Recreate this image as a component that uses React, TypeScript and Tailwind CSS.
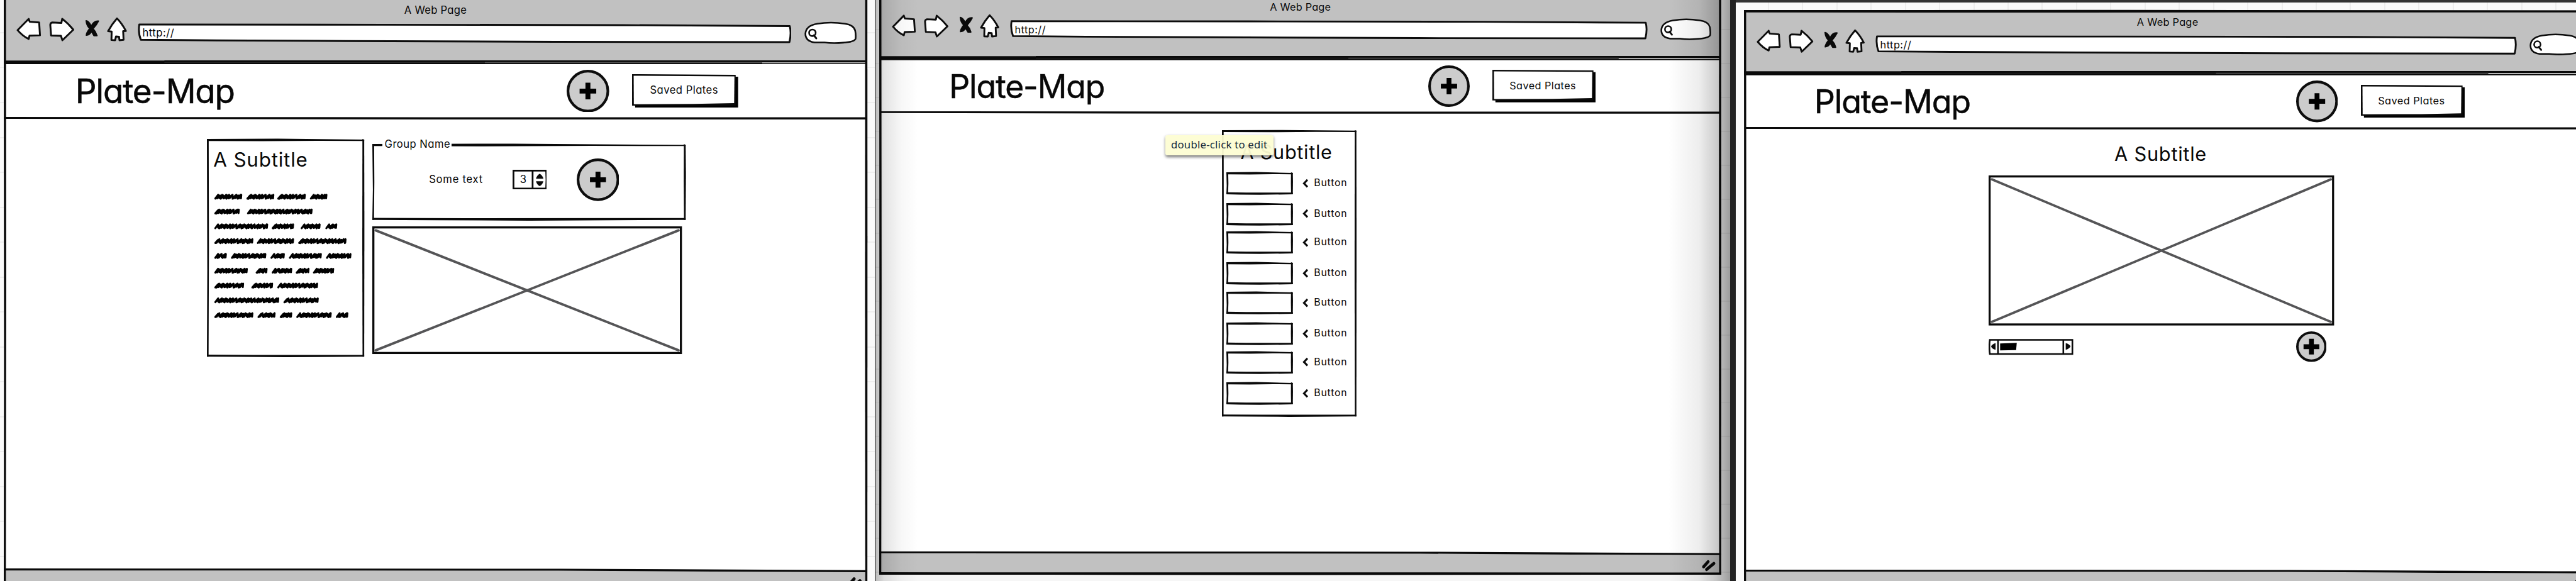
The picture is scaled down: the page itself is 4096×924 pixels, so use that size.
import type { ReactNode } from "react";

/* Hand-drawn rectangle outline, ink thickness varies along each edge. */
function Ink({ w, h, t = 3.6, skew = 1 }: { w: number; h: number; t?: number; skew?: number }) {
  const s = skew;
  return (
    <svg
      className="pointer-events-none absolute left-0 top-0 overflow-visible"
      width={w}
      height={h}
      viewBox={`0 0 ${w} ${h}`}
      fill="#0a0a0a"
    >
      <path d={`M0 0 L${w * 0.45} -${0.4 * s} L${w} ${s} L${w} ${t} L${w * 0.7} ${t - 0.2} L${w * 0.35} ${t + 0.3 * s} L0 ${t}Z`} />
      <path d={`M0 ${h - t} L${w * 0.3} ${h - t + 0.4 * s} L${w} ${h - t + 0.4} L${w} ${h} L${w * 0.5} ${h + 0.9 * s} L${w * 0.2} ${h + 0.4 * s} L0 ${h}Z`} />
      <path d={`M0 0 L${t - 0.4} 0 L${t} ${h * 0.5} L${t - 0.6} ${h} L0 ${h} L${0.6 * s} ${h * 0.6}Z`} />
      <path d={`M${w - t + 0.4} 0 L${w} ${s} L${w + 0.3 * s} ${h * 0.4} L${w} ${h} L${w - t + 0.6} ${h} L${w - t + 0.2} ${h * 0.5}Z`} />
    </svg>
  );
}

function PlusIcon({ size, bar, thick, ring = 4.3 }: { size: number; bar: number; thick: number; ring?: number }) {
  const c = size / 2;
  return (
    <svg className="block shrink-0" width={size} height={size} viewBox={`0 0 ${size} ${size}`}>
      <circle cx={c} cy={c} r={c - ring / 2} fill="#cccccc" stroke="#0d0d0d" strokeWidth={ring} />
      <path
        d={`M${c - bar / 2} ${c}H${c + bar / 2}M${c} ${c - bar / 2}V${c + bar / 2}`}
        stroke="#000"
        strokeWidth={thick}
      />
    </svg>
  );
}

function NavIcons() {
  const ink = { fill: "#fff", stroke: "#0d0d0d", strokeWidth: 9, strokeLinejoin: "round" as const };
  return (
    <>
      <svg className="block shrink-0" width="40" height="44" viewBox="81 84 120 132">
        <path d="M87 148 L141 93 L146 107 L192 111 L196 173 L145 175 L141 191 Q112 178 87 148Z" {...ink} />
      </svg>
      <svg className="ml-3 block shrink-0" width="42" height="44" viewBox="237 84 126 132">
        <path d="M246 122 Q247 112 256 111 L300 113 L304 93 Q336 118 358 146 L305 197 L298 176 L250 174Z" {...ink} />
      </svg>
      <svg className="ml-[17px] block shrink-0" width="24" height="44" viewBox="414 84 72 132">
        <g fill="#0a0a0a" stroke="#0a0a0a" strokeWidth="6" strokeLinejoin="round">
          <path d="M420 102 Q433 104 445 128 Q458 101 480 104 Q470 124 454 141 Q468 156 473 175 L458 175 Q452 165 446 154 Q438 172 421 173 Q420 163 437 140 Q422 126 420 102Z" />
        </g>
      </svg>
      <svg className="ml-[11px] block shrink-0" width="33" height="44" viewBox="519 84 99 132">
        <path d="M568 91 Q594 118 611 152 L598 153 L600 195 L580 197 L578 180 L563 179 L559 197 L541 196 L542 155 L525 153 Q544 118 568 91Z" {...ink} />
      </svg>
    </>
  );
}

function UrlBar() {
  return (
    <div className="relative ml-[17px] h-11 w-[1060px] shrink-0">
      <svg className="absolute left-0 top-0 block" width="1060" height="44" viewBox="223 28 1060 44">
        <path
          d="M225.5 40.3 L620 40.6 L1010 41.2 L1280 42.8 Q1283 54 1279.5 68.8 L900 68.3 L560 67 L350 66 L228 65 Q223.500 54 225.5 40.3Z"
          fill="#fff"
          stroke="#0d0d0d"
          strokeWidth="3"
          strokeLinejoin="round"
        />
      </svg>
      <div className="relative pl-[8px] pt-[14px] text-[17px] leading-6 tracking-[0.5px]">http://</div>
    </div>
  );
}

function SearchPill() {
  return (
    <svg className="ml-[21px] block shrink-0" width="85" height="44" viewBox="1212 84 255 132">
      <path
        d="M1217 165 Q1220 126 1275 117 Q1340 106 1410 117 Q1452 123 1459 150 Q1463 170 1461 190 Q1455 205 1400 209 Q1350 213 1310 208 L1262 208 Q1217 202 1217 165Z"
        fill="#fff"
        stroke="#0d0d0d"
        strokeWidth="8"
      />
      <circle cx="1251" cy="161" r="16" fill="none" stroke="#0d0d0d" strokeWidth="8" />
      <path d="M1258 173 L1270 188" stroke="#0d0d0d" strokeWidth="9" strokeLinecap="round" />
    </svg>
  );
}

function SavedPlates() {
  return (
    <div className="relative ml-[37.500px] mt-[1px] h-[54px] w-[172px] shrink-0">
      <svg className="absolute left-0 top-0 block" width="172" height="54" viewBox="0 0 172 54">
        <path d="M5 4 H172 V54 H5Z" fill="#000" />
        <path d="M0 0 L168 1 V51 H0Z" fill="#0a0a0a" />
        <path d="M2.600 2.500 L166 3.500 L165.500 47 L100 48.300 L2.900 48.600Z" fill="#fff" />
      </svg>
      <div className="relative w-[168px] pt-[14.500px] text-center text-[17px] leading-6 tracking-[0.45px]">Saved Plates</div>
    </div>
  );
}

function BrowserWindow({ children }: { children: ReactNode }) {
  return (
    <div className="relative flex h-[964px] w-[1400px] shrink-0 flex-col bg-white">
      <div className="flex h-[101px] shrink-0 flex-col bg-[#c1c1c1] pt-[10.500px]">
        <div className="text-center text-[17px] leading-5 tracking-[0.25px]">A Web Page</div>
        <div className="flex items-start pl-[21px] pt-[1px]">
          <NavIcons />
          <UrlBar />
          <SearchPill />
        </div>
      </div>
      <svg className="block shrink-0" width="1400" height="7" viewBox="0 0 1400 7">
        <rect width="1400" height="7" fill="#0a0a0a" />
        <path d="M260 3.200 L780 2.800 L780 4 L260 4Z" fill="#2a2a2a" />
        <path d="M780 2.900 H1230 V4.400 H780Z" fill="#555" />
        <path d="M1230 3.200 H1400 V4.700 H1230Z" fill="#e4e4e4" />
        <path d="M0 0 H260 V0.500 H0Z" fill="#777" />
      </svg>
      <div className="flex h-[85px] shrink-0 items-center pl-[116px]">
        <div className="w-[796.500px] shrink-0 pt-[2px] text-[54px] leading-[60px] tracking-[-1.200px] [-webkit-text-stroke:0.5px_#080808]">
          Plate-Map
        </div>
        <div className="pt-px">
          <PlusIcon size={69} bar={27} thick={8} />
        </div>
        <SavedPlates />
      </div>
      <svg className="block shrink-0" width="1400" height="4" viewBox="0 0 1400 4">
        <path d="M0 0 L700 0.500 L1400 0.500 V4 L700 4 L0 3Z" fill="#0a0a0a" />
      </svg>
      <div className="flex min-h-0 flex-1 flex-col">{children}</div>
      <div className="relative h-[39px] shrink-0">
        <svg className="block" width="1400" height="39" viewBox="0 0 1400 39">
          <path d="M0 0 L900 1 L1400 3.500 V39 H0Z" fill="#c1c1c1" />
          <path d="M0 0 L900 0.500 L1400 2.800 V6 L1150 5.200 L900 3.600 L0 3.200Z" fill="#0a0a0a" />
          <path d="M1371 25.500 L1378.500 17" stroke="#0a0a0a" strokeWidth="5" strokeLinecap="round" />
          <path d="M1376 30 L1388 20" stroke="#0a0a0a" strokeWidth="5" strokeLinecap="round" />
        </svg>
      </div>
      <Ink w={1400} h={964} t={4} skew={0.6} />
    </div>
  );
}

function ImagePlaceholder({ w, h }: { w: number; h: number }) {
  return (
    <svg className="block overflow-visible" width={w} height={h} viewBox={`0 0 ${w} ${h}`}>
      <path
        d={`M5.5 6.500 L${w - 5.5} ${h - 6}M${w - 5.5} 6.500 L5.5 ${h - 6}`}
        stroke="#555557"
        strokeWidth="3.900"
        strokeLinecap="round"
      />
      <rect x="1.700" y="1.700" width={w - 3.4} height={h - 3.4} fill="none" stroke="#0a0a0a" strokeWidth="3.400" />
    </svg>
  );
}

/* Word extents of the scribbled paragraph, per line. */
const scribbleLines: [number, number][][] = [
  [[0, 45], [52, 97], [102, 148], [155, 183]],
  [[0, 41], [53, 159]],
  [[0, 87], [93, 129], [140, 172], [180, 199]],
  [[0, 63], [69, 129], [136, 214]],
  [[0, 20], [27, 84], [91, 114], [121, 174], [181, 222]],
  [[0, 54], [67, 86], [93, 126], [132, 154], [160, 194]],
  [[0, 48], [60, 95], [102, 168]],
  [[0, 105], [112, 169]],
  [[0, 63], [70, 99], [106, 126], [133, 190], [197, 217]],
];

function scribble(x0: number, x1: number, y: number) {
  let x = x0 + 1.5;
  let d = `M${x} ${y + 3}`;
  let i = Math.round(x0 * 7 + y) % 5;
  while (x < x1 - 6) {
    const step = [3.6, 2, 4.6, 1.6, 3][i % 5];
    d += ` L${x + 4.5} ${y - 3 + (i % 2)} L${x + step} ${y + 3.2 - (i % 3) * 0.6}`;
    x += step;
    i += 1;
  }
  return d + ` L${x1 - 1.5} ${y - 3} L${x1 - 2} ${y + 2.5}`;
}

function ScribbleText() {
  return (
    <svg className="block" width="230" height="212" viewBox="-3 0 230 212">
      {scribbleLines.map((words, row) =>
        words.map(([a, b]) => (
          <path
            key={`${row}-${a}`}
            d={scribble(a, b, 9 + row * 24)}
            fill="none"
            stroke="#000"
            strokeWidth="3.300"
            strokeLinejoin="round"
            strokeLinecap="round"
          />
        )),
      )}
    </svg>
  );
}

function Stepper() {
  return (
    <div className="relative flex h-8 w-[56px] shrink-0 items-center bg-white">
      <div className="w-[34px] pl-[12.500px] text-[17px] leading-6">3</div>
      <svg className="absolute left-0 top-0 block" width="56" height="32" viewBox="0 0 56 32">
        <path d="M1.500 1.500 H54.500 L55 16 L54.500 30.500 H1.500Z M32.500 1.500 V30.500" fill="none" stroke="#0a0a0a" strokeWidth="2.800" />
        <path d="M38 14.500 Q39.500 9 44 6.500 Q48.500 9 50 14.500Z" fill="#0a0a0a" />
        <path d="M38 18.500 H50 Q48.500 24 44 26.500 Q39.500 24 38 18.500Z" fill="#0a0a0a" />
      </svg>
    </div>
  );
}

function GroupScreen() {
  return (
    <div className="flex items-start pl-[329.500px] pt-[32px]">
      <div className="relative h-[353px] w-[255px] shrink-0 pl-[10.500px] pt-[14px]">
        <div className="text-[32px] leading-10 tracking-[0.8px]">A Subtitle</div>
        <div className="-ml-px mt-[31px]">
          <ScribbleText />
        </div>
        <Ink w={255} h={353} t={3.3} />
      </div>
      <div className="ml-[13px] flex flex-col pt-[8.500px]">
        <div className="relative flex h-[123px] w-[508px] items-start pl-[92px] pt-[23px]">
          <Ink w={508} h={123} t={3.3} skew={1.5} />
          <div className="absolute left-[16px] top-[-12px] w-[113px] bg-white pl-1 text-[17px] leading-6 tracking-[0.45px]">
            Group Name
          </div>
          <div className="flex h-[69px] items-center">
            <div className="w-[135px] text-[17px] leading-6 tracking-[0.75px]">Some text</div>
            <Stepper />
            <div className="ml-[48px]">
              <PlusIcon size={69} bar={26} thick={8} />
            </div>
          </div>
        </div>
        <div className="pt-[10.500px]">
          <ImagePlaceholder w={502} h={207} />
        </div>
      </div>
    </div>
  );
}

function ButtonRow() {
  return (
    <div className="flex h-[36.600px] items-center">
      <div className="relative h-[36.600px] w-[110.500px] shrink-0">
        <Ink w={110.5} h={36.6} t={3.4} />
      </div>
      <svg className="ml-4 block shrink-0" width="10" height="16" viewBox="0 0 10 16">
        <path d="M8.300 2 L2.500 8 L8.300 14" fill="none" stroke="#0a0a0a" strokeWidth="3.200" />
      </svg>
      <div className="pl-[9.500px] text-[16.500px] leading-6 tracking-[0.85px]">Button</div>
    </div>
  );
}

function ButtonListScreen() {
  return (
    <div className="flex pl-[569px] pt-[27px]">
      <div className="relative h-[476px] w-[223.500px] pl-[7.500px]">
        <Ink w={223.5} h={476} t={3.2} skew={0.8} />
        <div className="h-[70.500px] pl-[24px] pt-[17px] text-[32px] leading-10 tracking-[0.75px]">A Subtitle</div>
        <div className="flex flex-col">
          <ButtonRow />
          <div className="h-[14.200px]" />
          <ButtonRow />
          <div className="h-[11.300px]" />
          <ButtonRow />
          <div className="h-[14.700px]" />
          <ButtonRow />
          <div className="h-[12.600px]" />
          <ButtonRow />
          <div className="h-[14.400px]" />
          <ButtonRow />
          <div className="h-[10.900px]" />
          <ButtonRow />
          <div className="h-[15px]" />
          <ButtonRow />
        </div>
        <div className="absolute left-[-94px] top-[9px] h-[33px] w-[180px] rounded-[4px] bg-[#fdfdd3]/95 text-center font-['Noto_Sans',sans-serif] text-[17.500px] leading-[32px] tracking-[0.250px] whitespace-nowrap text-[#14283a] shadow-[0_3px_5px_rgba(0,0,0,0.5)]">
          double-click to edit
        </div>
      </div>
    </div>
  );
}

function ScrollBar() {
  return (
    <svg className="block" width="140" height="27" viewBox="0 0 140 27">
      <path d="M2 1.500 H138.500 V25 H2 Q0.500 13 2 1.500Z M15.500 1.500 V25 M123.500 1.500 V25" fill="none" stroke="#0a0a0a" strokeWidth="2.700" />
      <path d="M11.500 7 V18 Q5.500 16.500 4 12.500 Q6 8.500 11.500 7Z" fill="#0a0a0a" />
      <path d="M127.500 7 Q133.500 8.500 135.500 12.500 Q133 16.500 127.500 18Z" fill="#0a0a0a" />
      <path d="M19 7.500 L46.500 6.500 L45.500 18.500 L19 19Z" fill="#000" />
    </svg>
  );
}

function ImageScreen() {
  return (
    <div className="flex flex-col pl-[404px] pt-[21.500px]">
      <div className="w-[569px] text-center text-[32px] leading-10 tracking-[0.75px]">A Subtitle</div>
      <div className="pt-[14.500px]">
        <ImagePlaceholder w={571} h={248} />
      </div>
      <div className="flex w-[571px] items-start pt-[10px]">
        <div className="pt-[13px]">
          <ScrollBar />
        </div>
        <div className="ml-[368px]">
          <PlusIcon size={50.5} bar={26} thick={8} ring={4} />
        </div>
      </div>
    </div>
  );
}

export default function App() {
  return (
    <div className="h-[924px] w-[4096px] overflow-hidden bg-[#222222]">
      <div className="flex h-[942px] w-[4176px] font-['Inter',sans-serif] text-[#080808] [font-feature-settings:'cv11'] [zoom:0.980843]">
        <section className="h-full w-[1418px] shrink-0 overflow-hidden bg-[#fafafa] bg-[repeating-linear-gradient(to_bottom,transparent_0,transparent_52px,#eeeeee_52px,#eeeeee_54px,transparent_54px,transparent_56.600px)] pl-[6px]">
          <div className="-mt-[3.600px]">
            <BrowserWindow>
              <GroupScreen />
            </BrowserWindow>
          </div>
        </section>
        <div className="w-px shrink-0 bg-[#111111]" />
        <section className="relative h-full w-[1386px] shrink-0 overflow-hidden bg-[#f6f6f6] bg-[repeating-linear-gradient(to_bottom,transparent_0,transparent_47px,#eaeaea_47px,#eaeaea_49px,transparent_49px,transparent_55px)] pl-[6.700px]">
          <div className="-mt-[8px] [zoom:0.975]">
            <BrowserWindow>
              <ButtonListScreen />
            </BrowserWindow>
          </div>
          <div className="pointer-events-none absolute inset-y-0 left-0 w-[70px] bg-[linear-gradient(to_right,rgba(0,0,0,0.24),rgba(0,0,0,0.11)_20%,rgba(0,0,0,0.03)_60%,transparent)]" />
          <div className="pointer-events-none absolute inset-y-0 right-0 w-[100px] bg-[linear-gradient(to_left,rgba(0,0,0,0.36),rgba(0,0,0,0.2)_22%,rgba(0,0,0,0.07)_50%,transparent)]" />
        </section>
        <div className="w-[9px] shrink-0 bg-[#222222]" />
        <section className="h-full w-[1362px] shrink-0 overflow-hidden border-t-[5px] border-[#333333] bg-[#fafafa] bg-[repeating-linear-gradient(to_right,transparent_0,transparent_52px,#ededed_52px,#ededed_54px,transparent_54px,transparent_55.500px)] pl-[13.300px] pt-[12.300px]">
          <div className="[zoom:0.981]">
            <BrowserWindow>
              <ImageScreen />
            </BrowserWindow>
          </div>
        </section>
      </div>
    </div>
  );
}
